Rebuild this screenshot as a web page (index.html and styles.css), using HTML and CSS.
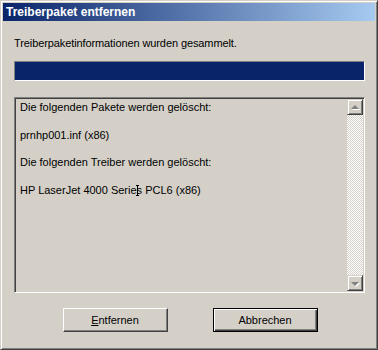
FILE: index.html
```html
<!DOCTYPE html>
<html lang="de">
<head>
<meta charset="utf-8">
<title>Treiberpaket entfernen</title>
<link rel="stylesheet" href="styles.css">
</head>
<body>
<div class="window">
  <div class="titlebar">Treiberpaket entfernen</div>
  <div class="content">
    <div class="status">Treiberpaketinformationen wurden gesammelt.</div>
    <div class="progress"><div class="fill"></div></div>
    <div class="listbox">
      <div class="items">
        <div class="item">Die folgenden Pakete werden gelöscht:</div>
        <div class="item">prnhp001.inf (x86)</div>
        <div class="item">Die folgenden Treiber werden gelöscht:</div>
        <div class="item">HP LaserJet 4000 Serie<span class="ibeam"></span>s PCL6 (x86)</div>
      </div>
      <div class="scrollbar">
        <div class="sbtn up"><span class="arrow-up"></span></div>
        <div class="track"></div>
        <div class="sbtn down"><span class="arrow-down"></span></div>
      </div>
    </div>
    <div class="buttons">
      <button class="btn"><u>E</u>ntfernen</button>
      <button class="btn default">Abbrechen</button>
    </div>
  </div>
</div>
</body>
</html>
```
FILE: styles.css
```css
* { box-sizing: border-box; }
html, body { margin: 0; padding: 0; background: #d4d0c8; }
body {
  font-family: "Liberation Sans", Arial, sans-serif;
  font-size: 11px;
  color: #000;
}
.window {
  width: 378px;
  height: 350px;
  background: #d4d0c8;
  border: 1px solid;
  border-color: #d4d0c8 #404040 #404040 #d4d0c8;
  box-shadow: inset 1px 1px #fff, inset -1px -1px #808080;
  padding: 2px;
  display: flex;
  flex-direction: column;
}
.titlebar {
  height: 18px;
  line-height: 18px;
  padding-left: 3px;
  color: #fff;
  font-weight: bold;
  font-size: 12px;
  background: linear-gradient(to right, #0a246a, #a6caf0);
}
.content {
  display: flex;
  flex-direction: column;
  padding: 16px 10px 0 11px;
}
.status {
  line-height: 13px;
  height: 13px;
  letter-spacing: -0.1px;
}
.progress {
  margin-top: 11px;
  width: 351px;
  height: 20px;
  border: 1px solid;
  border-color: #808080 #fff #fff #808080;
}
.progress .fill {
  height: 100%;
  background: #0a246a;
}
.listbox {
  margin-top: 16px;
  width: 351px;
  height: 196px;
  border: 1px solid;
  border-color: #808080 #fff #fff #808080;
  box-shadow: inset 1px 1px #404040, inset -1px -1px #d4d0c8;
  padding: 1px;
  display: flex;
}
.items {
  flex: 1;
  padding: 2px 0 0 4px;
  display: flex;
  flex-direction: column;
  gap: 14.7px;
}
.item {
  line-height: 13px;
  height: 13px;
  white-space: nowrap;
}
.ibeam {
  display: inline-block;
  vertical-align: top;
  margin: 1px -2px 0 -1px;
  width: 3px;
  height: 11px;
  border-top: 1px solid #000;
  border-bottom: 1px solid #000;
  background: linear-gradient(#000, #000) center / 1px 100% no-repeat;
}
.scrollbar {
  width: 16px;
  display: flex;
  flex-direction: column;
}
.track {
  flex: 1;
  background: repeating-conic-gradient(#fff 0 25%, #d4d0c8 0 50%) 0 0 / 2px 2px;
}
.sbtn {
  width: 16px;
  height: 16px;
  background: #d4d0c8;
  border: 1px solid;
  border-color: #d4d0c8 #404040 #404040 #d4d0c8;
  box-shadow: inset 1px 1px #fff, inset -1px -1px #808080;
  display: flex;
  align-items: center;
  justify-content: center;
}
.arrow-up, .arrow-down {
  width: 0;
  height: 0;
  border-left: 4px solid transparent;
  border-right: 4px solid transparent;
  filter: drop-shadow(1px 1px 0 #fff);
}
.arrow-up { border-bottom: 4px solid #808080; margin-top: -1px; }
.arrow-down { border-top: 4px solid #808080; margin-top: 1px; }
.buttons {
  margin-top: 15px;
  display: flex;
  justify-content: center;
  gap: 45px;
  padding-left: 1px;
}
.btn {
  width: 105px;
  height: 24px;
  font-family: "Liberation Sans", Arial, sans-serif;
  font-size: 11px;
  color: #000;
  background: #d4d0c8;
  border: 1px solid;
  border-color: #fff #404040 #404040 #fff;
  box-shadow: inset -1px -1px #808080;
  padding: 0;
  margin: 0;
}
.btn.default {
  border: 1px solid #000;
  box-shadow: inset 1px 1px #fff, inset -1px -1px #404040, inset -2px -2px #808080;
}
```
